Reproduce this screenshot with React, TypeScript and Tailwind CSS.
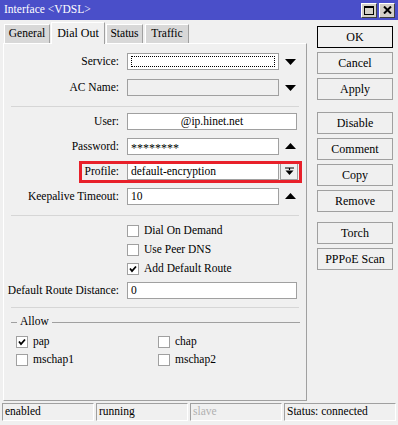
import React from "react";

const font = { fontFamily: '"Liberation Serif", "Times New Roman", serif' };

function DownArrow() {
  return (
    <svg width="11" height="6" viewBox="0 0 11 6">
      <path d="M0 0 H11 L5.5 6 Z" fill="#000" />
    </svg>
  );
}

function UpArrow() {
  return (
    <svg width="11" height="6" viewBox="0 0 11 6">
      <path d="M0 6 H11 L5.5 0 Z" fill="#000" />
    </svg>
  );
}

function Check() {
  return (
    <svg width="10" height="10" viewBox="0 0 10 10">
      <path d="M2 4.5 L4 7 L8 2.5" stroke="#000" strokeWidth="1.8" fill="none" />
    </svg>
  );
}

function Box({ checked }: { checked?: boolean }) {
  return (
    <span className="flex h-[12px] w-[12px] items-center justify-center border border-[#a0a0a0] bg-white">
      {checked && <Check />}
    </span>
  );
}

function Label({ children }: { children: React.ReactNode }) {
  return <span className="w-[116px] shrink-0 pr-[1px] text-right">{children}</span>;
}

function Field({ children, wide, grey, center, focus }: { children?: React.ReactNode; wide?: boolean; grey?: boolean; center?: boolean; focus?: boolean }) {
  return (
    <div
      className={`ml-[7px] flex h-[17px] items-center border border-[#a0a0a0] px-[3px] ${wide ? "w-[170px]" : "w-[152px]"} ${grey ? "bg-[#f0f0f0]" : "bg-white"} ${center ? "justify-center" : ""}`}
    >
      {focus && <div className="h-[11px] w-full border border-dotted border-black" />}
      {children}
    </div>
  );
}

function Sep() {
  return <div className="mx-[7px] h-[2px] border-t border-[#d6d6d6] border-b-white" />;
}

const buttons = [
  ["OK", 0],
  ["Cancel", 4],
  ["Apply", 4],
  ["Disable", 12],
  ["Comment", 4],
  ["Copy", 4],
  ["Remove", 4],
  ["Torch", 10],
  ["PPPoE Scan", 4],
] as const;

export default function App() {
  return (
    <div className="flex h-[425px] w-[398px] flex-col bg-[#f0f0f0] text-[11.5px] leading-none text-black" style={font}>
      {/* Title bar */}
      <div className="flex h-[20px] items-center justify-between bg-[#4a4fc9] pl-[4px] pr-[3px]">
        <span className="text-[11.5px] text-white">Interface &lt;VDSL&gt;</span>
        <div className="flex gap-[2px]">
          <div className="flex h-[15px] w-[16px] items-center justify-center border border-t-white border-l-white border-r-[#404040] border-b-[#404040] bg-[#d4d0c8]">
            <div className="h-[9px] w-[10px] border border-t-2 border-black" />
          </div>
          <div className="flex h-[15px] w-[16px] items-center justify-center border border-t-white border-l-white border-r-[#404040] border-b-[#404040] bg-[#d4d0c8]">
            <svg width="9" height="8" viewBox="0 0 9 8">
              <path d="M1 0.5 L8 7.5 M8 0.5 L1 7.5" stroke="#000" strokeWidth="2" />
            </svg>
          </div>
        </div>
      </div>

      <div className="flex h-[383px]">
        {/* Left: tabs + panel */}
        <div className="ml-[3px] flex w-[304px] flex-col pt-[2px]">
          <div className="flex h-[21px] items-end gap-[1px] pl-[1px]">
            <div className="flex h-[19px] w-[46px] items-center justify-center border-l border-t border-r border-l-white border-t-white border-r-[#a0a0a0] bg-[#d8d8d8]">General</div>
            <div className="relative z-10 -mb-px flex h-[22px] w-[54px] items-center justify-center border-l border-t border-r border-l-white border-t-white border-r-[#a0a0a0] bg-[#f0f0f0] pb-[2px] text-[12px]">Dial Out</div>
            <div className="flex h-[19px] w-[37px] items-center justify-center border-l border-t border-r border-l-white border-t-white border-r-[#a0a0a0] bg-[#d8d8d8]">Status</div>
            <div className="ml-[1px] flex h-[19px] w-[44px] items-center justify-center border-l border-t border-r border-l-white border-t-white border-r-[#a0a0a0] bg-[#d8d8d8]">Traffic</div>
          </div>
          <div className="flex h-[358px] flex-col border border-t-white border-l-white border-r-[#a0a0a0] border-b-[#a0a0a0] pt-[9px]">
            <div className="flex h-[17px] items-center">
              <Label>Service:</Label>
              <Field focus />
              <span className="ml-[6px] mt-[1px]"><DownArrow /></span>
            </div>
            <div className="mt-[9px] flex h-[17px] items-center">
              <Label>AC Name:</Label>
              <Field grey />
              <span className="ml-[6px] mt-[1px]"><DownArrow /></span>
            </div>
            <div className="mt-[10px]"><Sep /></div>
            <div className="mt-[5px] flex h-[17px] items-center">
              <Label>User:</Label>
              <Field wide center>@ip.hinet.net</Field>
            </div>
            <div className="mt-[8px] flex h-[17px] items-center">
              <Label>Password:</Label>
              <Field><span className="mt-[3px] text-[12px]">********</span></Field>
              <span className="ml-[6px] -mt-[2px]"><UpArrow /></span>
            </div>
            <div className="relative mt-[8px] flex h-[17px] items-center">
              <div className="absolute left-[75px] top-[-2px] h-[22px] w-[223px] border-[3px] border-[#e8202a]" />
              <Label>Profile:</Label>
              <Field>default-encryption</Field>
              <div className="ml-[1px] flex h-[17px] w-[18px] items-center justify-center border border-[#a0a0a0] bg-[#f0f0f0]">
                <svg width="9" height="9" viewBox="0 0 9 9">
                  <path d="M0 1 H9 M4.5 1.5 V3" stroke="#000" strokeWidth="1.2" />
                  <path d="M0.5 3.5 H8.5 L4.5 8 Z" fill="#000" />
                </svg>
              </div>
            </div>
            <div className="mt-[8px] flex h-[17px] items-center">
              <Label>Keepalive Timeout:</Label>
              <Field>10</Field>
              <span className="ml-[6px] -mt-[2px]"><UpArrow /></span>
            </div>
            <div className="mt-[10px]"><Sep /></div>
            {[
              ["Dial On Demand", false],
              ["Use Peer DNS", false],
              ["Add Default Route", true],
            ].map(([label, on], i) => (
              <div key={i} className={`flex h-[12px] items-center pl-[123px] ${i === 0 ? "mt-[8px]" : "mt-[7px]"}`}>
                <Box checked={on as boolean} />
                <span className="ml-[5px]">{label}</span>
              </div>
            ))}
            <div className="mt-[7px] flex h-[17px] items-center">
              <Label>Default Route Distance:</Label>
              <Field wide>0</Field>
            </div>
            <div className="mt-[8px]"><Sep /></div>
            <div className="mt-[7px] flex h-[12px] items-center pl-[7px] pr-[6px]">
              <div className="h-px w-[6px] bg-[#a0a0a0]" />
              <span className="mx-[3px]">Allow</span>
              <div className="h-px flex-1 bg-[#a0a0a0]" />
            </div>
            <div className="mt-[8px] grid grid-cols-[142px_1fr] gap-y-[6px] pl-[12px]">
              {[
                ["pap", true],
                ["chap", false],
                ["mschap1", false],
                ["mschap2", false],
              ].map(([label, on], i) => (
                <div key={i} className="flex h-[12px] items-center">
                  <Box checked={on as boolean} />
                  <span className="ml-[5px]">{label}</span>
                </div>
              ))}
            </div>
          </div>
        </div>

        {/* Right: buttons */}
        <div className="ml-[10px] flex w-[76px] flex-col pt-[6px]">
          {buttons.map(([label, gap]) => (
            <div
              key={label}
              style={{ marginTop: gap }}
              className={`flex h-[22px] items-center justify-center border bg-[#f0f0f0] text-[12px] ${label === "OK" ? "border-black" : "border-[#a0a0a0]"}`}
            >
              {label}
            </div>
          ))}
        </div>
      </div>

      {/* Status bar */}
      <div className="flex h-[18px] gap-[2px] px-[2px]">
        {[
          ["enabled", "w-[92px]", ""],
          ["running", "w-[92px]", ""],
          ["slave", "w-[92px]", "text-[#b0b0b0]"],
          ["Status: connected", "flex-1", ""],
        ].map(([t, w, c]) => (
          <div key={t} className={`flex items-center border border-t-[#a0a0a0] border-l-[#a0a0a0] border-r-white border-b-white pl-[2px] ${w} ${c}`}>
            {t}
          </div>
        ))}
      </div>
    </div>
  );
}
